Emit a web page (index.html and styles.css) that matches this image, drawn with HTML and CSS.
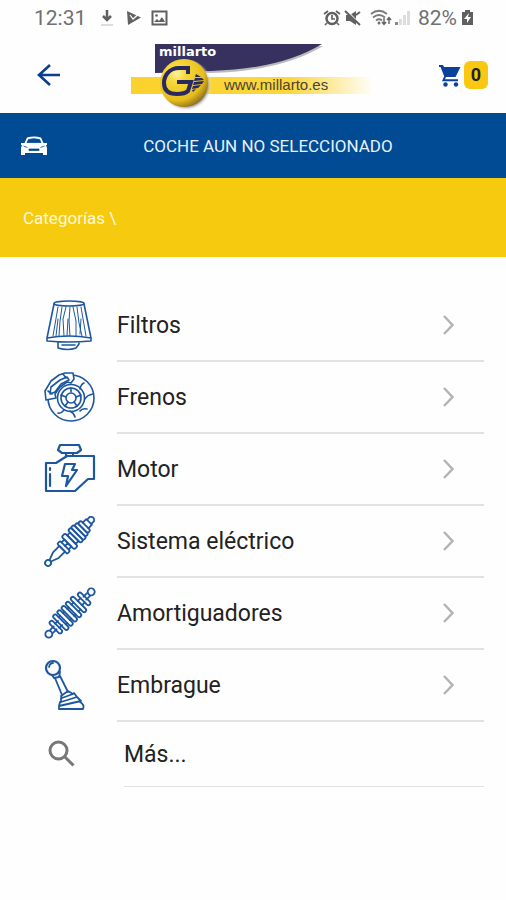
FILE: index.html
```html
<!DOCTYPE html>
<html lang="es">
<head>
    <meta charset="UTF-8">
    <meta name="viewport" content="width=device-width, initial-scale=1.0">
    <title>Millarto - Categorías</title>
    <link rel="stylesheet" href="styles.css">
</head>
<body>
    <div class="status">
        <span class="hora">12:31</span>
        <svg class="st-descarga" width="14" height="18" viewBox="0 0 14 18"><path d="M7 1v9M3 7l4 4 4-4" fill="none" stroke="#606060" stroke-width="2.5"/><path d="M1 16h12" stroke="#ddd" stroke-width="2"/></svg>
        <svg class="st-play" width="16" height="18" viewBox="0 0 16 18"><path d="M1 2l14 6.500L2 16z" fill="#626262"/><path d="M4 6l3 4 8-7" fill="none" stroke="#fff" stroke-width="1.200"/></svg>
        <svg width="17" height="18" viewBox="0 0 17 18"><rect x="1.500" y="2.500" width="14" height="13" fill="none" stroke="#606060" stroke-width="2"/><path d="M3 13l3-3 2 2 3-4 3 5z" fill="#606060"/><circle cx="5.500" cy="6.500" r="1.300" fill="#606060"/></svg>
        <div class="status-der">
            <svg width="18" height="18" viewBox="0 0 18 18"><circle cx="9" cy="9.500" r="5.500" fill="none" stroke="#606060" stroke-width="2.500"/><path d="M9 6v4h3M1 5l4-3M17 5l-4-3M4 14l-2 2M14 14l2 2" fill="none" stroke="#606060" stroke-width="1.700"/></svg>
            <svg class="st-mudo" width="18" height="18" viewBox="0 0 18 18"><path d="M2 6h4l6-4v14l-6-4H2z" fill="#606060"/><path d="M3 2l14 14" stroke="#fff" stroke-width="1.500"/><path d="M1 2l15 14M12 6l4-3" stroke="#606060" stroke-width="2"/></svg>
            <svg class="st-wifi" width="22" height="18" viewBox="0 0 22 18"><g fill="none" stroke="#7a7a7a" stroke-width="1.700"><path d="M1 5q8-6.500 16 0M3 8.500q6-5 12 0M6 11.500q3-2.500 6 0"/></g><circle cx="9" cy="14" r="1.500" fill="#707070"/><path d="M14 9v6M12 13l2 2.500 2-2.500M19 15V9M17 11l2-2.500 2 2.500" fill="none" stroke="#606060" stroke-width="1.400"/></svg>
            <svg class="st-red" width="17" height="18" viewBox="0 0 17 18"><path d="M1 13h3v3H1z" fill="#888"/><path d="M5 10h3v6H5zM9 6h3v10H9zM13 2h3v14h-3z" fill="#ddd"/></svg>
            <span class="bateria">82%</span>
            <svg width="13" height="18" viewBox="0 0 13 18"><path d="M4 1h5v2h3v13H1V3h3z" fill="#606060"/><path d="M8 4L3 10h3v4l4-6H7z" fill="#fff"/></svg>
        </div>
    </div>

    <header class="cabecera">
        <a class="volver" href="#" aria-label="Volver">
            <svg width="24" height="24" viewBox="0 0 24 24"><path d="M23 12H3M13 2L2 12l11 10" fill="none" stroke="#0a3f8c" stroke-width="2.600"/></svg>
        </a>
        <a class="logo" href="#" aria-label="Millarto">
            <svg width="244" height="70" viewBox="0 0 244 70">
                <defs>
                    <linearGradient id="banda"><stop offset="0" stop-color="#fbd12c"/><stop offset=".65" stop-color="#fbd73f"/><stop offset="1" stop-color="#fff"/></linearGradient>
                    <radialGradient id="bola" cx=".35" cy=".3" r=".75"><stop offset="0" stop-color="#fff3a0"/><stop offset=".25" stop-color="#f6d83a"/><stop offset=".75" stop-color="#e6bd1c"/><stop offset="1" stop-color="#8d701c"/></radialGradient>
                    <radialGradient id="sombra"><stop offset=".8" stop-color="#777"/><stop offset="1" stop-color="#fff" stop-opacity="0"/></radialGradient>
                </defs>
                <rect y="34" width="244" height="17" fill="url(#banda)"/>
                <path d="M25 3h167Q151 28 80 30H25z" fill="#bbb"/>
                <path d="M24 1h167Q150 26 80 28L24 30z" fill="#37315f"/>
                <circle cx="55" cy="42" r="26" fill="url(#sombra)"/>
                <circle cx="53" cy="40" r="24" fill="url(#bola)"/>
                <path d="M57 31V25H48C38 25 33 33 33 40c0 9 6 11 13 11 5 0 9-1 11-3l3-9H46" fill="none" stroke="#29285f" stroke-width="4"/>
                <path d="M65 31l5 3h-6zM64 35h7l2 2-10 1zM63 39l10-1-2 3-9 1zM62 43l8-1-3 3-6 1zM61 47l4-1-3 3z" fill="#29285f"/>
                <text class="logo-marca" x="28" y="13">millarto</text>
                <text class="logo-web" x="93" y="47">www.millarto.es</text>
            </svg>
        </a>
        <a class="carrito" href="#" aria-label="Carrito">
            <svg width="24" height="24" viewBox="0 0 24 24"><path d="M1 2h4l1 2h16.500l-5 10H8l-1 2.200h13v2H4l2.200-5L2.500 4H1z" fill="#0a429b"/><circle cx="7.500" cy="21.500" r="2.200" fill="#0a429b"/><circle cx="18" cy="21.500" r="2.200" fill="#0a429b"/></svg>
            <span class="contador">0</span>
        </a>
    </header>

    <div class="coche">
        <svg width="26" height="20" viewBox="0 0 26 20"><path d="M6 1.500Q13-.5 20 1.500l2.500 5.500H26v2h-1l1 3v7h-4v-2H4v2H0v-7l1-3H0V7h3.500z" fill="#fff"/><path d="M7.500 3.500q5.500-1.500 11 0L20 6.500H6zM8 13h10v1.500H8zM2.500 10l4 1.500M23.500 10l-4 1.500" fill="#004b93" stroke="#004b93" stroke-width=".8"/></svg>
        <h1>COCHE AUN NO SELECCIONADO</h1>
    </div>

    <nav class="migas"><a href="#">Categorías \</a></nav>

    <main>
        <ul class="lista">
            <li><a href="#">
                <svg class="icono" viewBox="0 0 52 52">
                    <ellipse cx="25" cy="4.500" rx="15" ry="2.500"/>
                    <path d="M10 5L3 39M40 5l7 34M3 39q22-4 44 0v3q-22 2-44 0zM14 43v6q10 3 18 0l3-4v-2M18 46h13"/>
                    <path class="fino" d="M14 8L9 37M18 8l-2 14-1 15M22 8l-3 12 1 17M26 8l-1 14 1 15M29 8l3 14v15M33 8l2 16 3 13M37 8l5 29M14 20l-2 17M24 20l-1 17M37 20l-1 15"/>
                </svg>
                <span>Filtros</span>
                <svg class="flecha" viewBox="0 0 12 20"><path d="M2 1l8.500 9L2 19"/></svg>
            </a></li>
            <li><a href="#">
                <svg class="icono" viewBox="0 0 52 52">
                    <circle cx="27" cy="27" r="23"/><circle cx="27" cy="27" r="13.500"/><circle cx="27" cy="27" r="10"/><circle cx="27" cy="27" r="5"/>
                    <path d="M27 17v4M37 24l-5 2M33 35l-3-4M21 35l3-4M17 24l5 2M40 12q-3 1-4 6M49 23q-6 1-8 5M43 38q-5-1-7 2M31 46q-1-4-5-6M14 42q3 1 6-3"/>
                    <path fill="#fff" d="M2 29l-1-9 6-10 8-6 6-2h8l1 6-3 4-4-1-7 5-5 7 1 4z"/>
                    <path d="M6 23l1-7 9-7 7-3 2 3-8 4-6 8zM4 20l4 3M19 3l3 4"/>
                </svg>
                <span>Frenos</span>
                <svg class="flecha" viewBox="0 0 12 20"><path d="M2 1l8.500 9L2 19"/></svg>
            </a></li>
            <li><a href="#">
                <svg class="icono" viewBox="0 0 52 52">
                    <path class="grueso" d="M50 13H23l-11 7H2v28h29l13-12h6V13M16 2h19l2 5-4 3H18l-4-3zM22 10v3M29 10v3M6 31v12M6 25v2"/>
                    <path class="grueso" d="M21 21h10l-3 6h5L22 43l2-10h-6z"/>
                </svg>
                <span>Motor</span>
                <svg class="flecha" viewBox="0 0 12 20"><path d="M2 1l8.500 9L2 19"/></svg>
            </a></li>
            <li><a href="#">
                <svg class="icono" viewBox="0 0 52 52">
                    <g class="medio" transform="rotate(-45 26 26)">
                        <circle cx="-5" cy="26" r="3"/>
                        <path d="M-2 25l8-3h9v8H6l-8-3"/>
                        <rect x="15" y="19" width="4" height="14" rx="1"/>
                        <path d="M19 21h4v10h-4M19 26h4"/>
                        <rect x="23" y="17" width="5" height="18" rx="2"/>
                        <rect x="28" y="20" width="4" height="12"/>
                        <rect x="32" y="17" width="4" height="18" rx="2"/>
                        <rect x="36" y="17" width="4" height="18" rx="2"/>
                        <rect x="40" y="18" width="4" height="16" rx="2"/>
                        <rect x="44" y="19" width="4" height="14" rx="2"/>
                        <path d="M48 22h5v8h-5M53 23h4q4 3 0 6h-4"/>
                    </g>
                </svg>
                <span>Sistema eléctrico</span>
                <svg class="flecha" viewBox="0 0 12 20"><path d="M2 1l8.500 9L2 19"/></svg>
            </a></li>
            <li><a href="#">
                <svg class="icono" viewBox="0 0 52 52">
                    <g class="medio" transform="rotate(-45 26 26)">
                        <circle cx="-4" cy="26" r="3.500"/><circle cx="56" cy="26" r="3.500"/>
                        <path d="M0 24h5M0 28h5M47 24h5M47 28h5M8 23h4M8 29h4M40 23h4M40 29h4"/>
                        <rect x="4" y="18" width="4" height="16" rx="2"/><rect x="44" y="18" width="4" height="16" rx="2"/>
                        <rect x="11" y="16" width="4" height="20" rx="2"/><rect x="17" y="16" width="4" height="20" rx="2"/><rect x="23" y="16" width="4" height="20" rx="2"/><rect x="29" y="16" width="4" height="20" rx="2"/><rect x="36" y="16" width="4" height="20" rx="2"/>
                        <path d="M15 21h2M15 31h2M21 21h2M21 31h2M27 21h2M27 31h2M33 21h3M33 31h3"/>
                    </g>
                </svg>
                <span>Amortiguadores</span>
                <svg class="flecha" viewBox="0 0 12 20"><path d="M2 1l8.500 9L2 19"/></svg>
            </a></li>
            <li><a href="#">
                <svg class="icono" viewBox="0 0 52 52">
                    <circle class="grueso" cx="9" cy="9" r="7"/>
                    <path class="medio" d="M9 4q-3 0-4 4M8 16l2 3 5-1 1-5M11 19l7 17M16 17l8 16M17 37l7-5 5 3-11 4zM17 39v4l16-5-3-4M16 43l-1 4 22-5-4-4M15 47v3h24q2-4-3-7"/>
                </svg>
                <span>Embrague</span>
                <svg class="flecha" viewBox="0 0 12 20"><path d="M2 1l8.500 9L2 19"/></svg>
            </a></li>
            <li class="mas"><a href="#">
                <svg class="lupa" viewBox="0 0 28 28"><circle cx="10.500" cy="10.500" r="8.500"/><path d="M16.500 16.500l9 9"/></svg>
                <span>Más...</span>
            </a></li>
        </ul>
    </main>
</body>
</html>
```
FILE: styles.css
```css
*{
    box-sizing: border-box;
}
body{
    margin: 0;
    background-color: #fefefe;
    font-family: Roboto, "Liberation Sans", sans-serif;
    color: #222;
}
a{
    color: inherit;
    text-decoration: none;
}
svg{
    display: block;
    flex: none;
}

/* barra de estado */
.status{
    display: flex;
    align-items: center;
    height: 36px;
    padding: 0 32px 0 34px;
    font-size: 21px;
    color: #707070;
}
.hora{
    margin-right: 14px;
}
.st-descarga{
    margin-right: 12px;
}
.st-play{
    margin-right: 9px;
}
.status-der{
    display: flex;
    align-items: center;
    margin-left: auto;
}
.st-mudo{
    margin-left: 3px;
}
.st-wifi{
    margin-left: 8px;
}
.st-red{
    margin-left: 2px;
}
.bateria{
    margin: 0 4px 0 7px;
}

/* cabecera */
.cabecera{
    display: grid;
    grid-template-columns: 1fr auto 1fr;
    align-items: center;
    height: 77px;
    padding: 0 18px;
}
.volver{
    padding-left: 19px;
}
.logo{
    padding-top: 7px;
}
.logo-marca{
    font: bold 13px "DejaVu Sans", sans-serif;
    fill: #fff;
}
.logo-web{
    font: 15px "Liberation Sans", sans-serif;
    fill: #4b4336;
}
.carrito{
    display: flex;
    align-items: center;
    justify-content: flex-end;
    gap: 2px;
}
.contador{
    width: 24px;
    height: 28px;
    border-radius: 6px;
    background-color: #fac711;
    font-size: 18px;
    font-weight: bold;
    line-height: 28px;
    text-align: center;
}

.coche{
    display: flex;
    align-items: center;
    height: 65px;
    padding: 0 17px 0 21px;
    background-color: #004b93;
    color: #e8f1fa;
}
.coche h1{
    flex: 1;
    margin: 0;
    font-size: 17px;
    font-weight: normal;
    text-align: center;
}
.migas{
    display: flex;
    align-items: center;
    height: 79px;
    padding-left: 23px;
    background-color: #f6ca0e;
    color: #fff8d8;
    font-size: 17px;
}

/* lista de categorias */
.lista{
    margin: 0;
    padding: 32px 22px 0 44px;
    list-style: none;
}
.lista a{
    display: flex;
    align-items: center;
    height: 72px;
    font-size: 23px;
}
.lista span{
    flex: 1;
}
.lista li{
    position: relative;
}
.lista li::after{
    content: "";
    position: absolute;
    left: 73px;
    right: 0;
    bottom: -1px;
    height: 2px;
    background-color: #e2e2e2;
}
.icono{
    width: 52px;
    height: 52px;
    margin-right: 21px;
    overflow: visible;
    fill: none;
    stroke: #1c57a0;
    stroke-width: 1.6;
    stroke-linejoin: round;
    stroke-linecap: round;
}
.fino{
    stroke-width: 1;
}
.medio{
    stroke-width: 1.8;
}
.grueso{
    stroke-width: 2.2;
}
.flecha{
    width: 12px;
    height: 20px;
    margin-right: 30px;
    fill: none;
    stroke: #b4b4b4;
    stroke-width: 2.5;
}
.lista .mas a{
    height: 66px;
}
.lista .mas::after{
    left: 80px;
}
.lupa{
    width: 28px;
    height: 28px;
    margin: 0 48px 0 4px;
    fill: none;
    stroke: #777;
    stroke-width: 3;
}
```
